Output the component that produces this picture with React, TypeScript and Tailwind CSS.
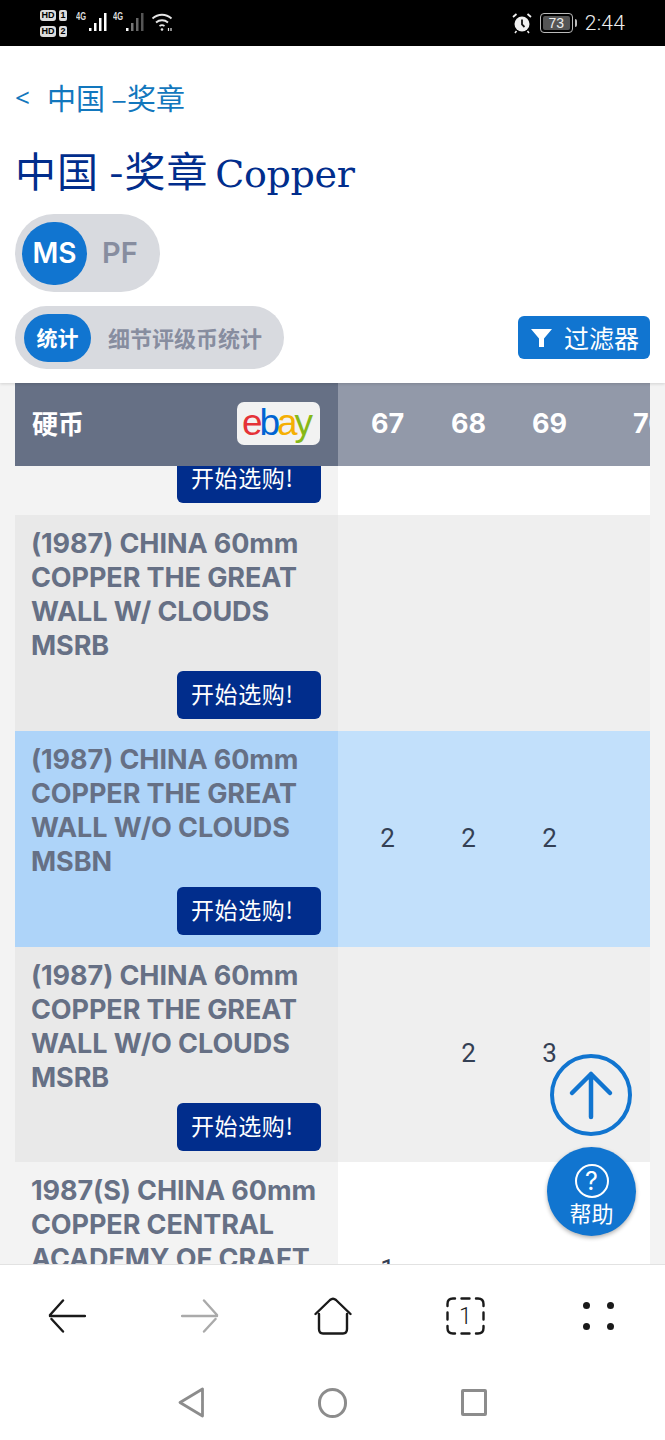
import React from "react";

const sans = "font-['Inter','Noto_Sans_CJK_SC',sans-serif]";

const Signal = ({ dim }: { dim?: boolean }) => (
  <div className="flex items-start w-[32px]">
    <span className="w-[12px] text-[10px] leading-[10px] font-bold text-[#ddd] font-['Liberation_Sans',sans-serif] scale-x-75 origin-left">4G</span>
    <svg width="20" height="20" viewBox="0 0 20 20">
      <rect x="1" y="16" width="2.500" height="3" fill="#fff" />
      <rect x="6" y="11" width="2.500" height="8" fill={dim ? "#777" : "#fff"} />
      <rect x="11" y="6" width="2.500" height="13" fill={dim ? "#666" : "#fff"} />
      <rect x="16" y="1" width="2.500" height="18" fill={dim ? "#555" : "#fff"} />
    </svg>
  </div>
);

const HdBadge = ({ n }: { n: number }) => (
  <div className="flex items-center gap-[3px]">
    <span className="w-[16px] h-[11px] rounded-[3px] bg-[#ddd] text-black text-[9px] leading-[11px] font-bold text-center font-['Liberation_Sans',sans-serif]">HD</span>
    <span className="w-[8px] h-[11px] rounded-[2px] bg-[#ddd] text-black text-[9px] leading-[11px] font-bold text-center font-['Liberation_Sans',sans-serif]">{n}</span>
  </div>
);

const StatusBar = () => (
  <div className="h-[46px] shrink-0 bg-black flex items-center justify-between pl-[40px] pr-[40px]">
    <div className="flex items-center">
      <div className="flex flex-col gap-[5px] pt-px">
        <HdBadge n={1} />
        <HdBadge n={2} />
      </div>
      <div className="flex items-center gap-[5px] ml-[9px] mt-[-2px]">
        <Signal />
        <Signal dim />
      </div>
      <svg width="24" height="22" viewBox="0 0 24 22" className="ml-[6px] mt-[-2px]" fill="none" stroke="#e5e5e5" strokeWidth="1.800">
        <path d="M1.500 7.500C7 2.500 15 2.500 20.500 7.500" />
        <path d="M5 11.500C8.500 8.500 13.500 8.500 17 11.500" />
        <path d="M8.500 15C10 14 12 14 13.500 15" />
        <circle cx="11" cy="18.500" r="1.300" fill="#e5e5e5" stroke="none" />
        <path d="M17.500 17v3M20 17v3" strokeWidth="1.200" />
      </svg>
    </div>
    <div className="flex items-center">
      <svg width="22" height="22" viewBox="0 0 22 22" className="mr-[7px]">
        <circle cx="11" cy="12" r="7.500" fill="#f0f0f0" />
        <path d="M11 7.500V12.500L13.500 15" stroke="#111" strokeWidth="1.800" fill="none" />
        <path d="M2 5L5.500 2M20 5L16.500 2" stroke="#f0f0f0" strokeWidth="1.800" />
        <path d="M5.500 19L4 21M16.500 19L18 21" stroke="#f0f0f0" strokeWidth="1.500" />
      </svg>
      <div className="w-[33px] h-[20px] rounded-[4px] border border-[#bbb] p-[2px] flex">
        <div className="flex-1 rounded-[2px] bg-[#555] text-[#eee] text-[14px] leading-[14px] text-center font-['Liberation_Sans',sans-serif]">73</div>
      </div>
      <div className="w-[2px] h-[8px] bg-[#bbb] ml-[2px] mr-[8px] rounded-r-sm" />
      <span className="text-[21px] leading-none text-[#eee] font-['Roboto',sans-serif] font-light tracking-[0.2px]">2:44</span>
    </div>
  </div>
);

const Header = () => (
  <div className="h-[337px] shrink-0 bg-white relative z-10 shadow-[0_1px_3px_rgba(0,0,0,0.14)] pl-[15px] pr-[15px]">
    <div className="pt-[31px] flex items-center h-[70px] text-[29px] leading-[34px] text-[#1277bd]">
      <span className="text-[26px] mr-[17px] font-['Noto_Sans',sans-serif]">&lt;</span>
      <span className="font-['Noto_Sans_CJK_SC',sans-serif]">中国 –奖章</span>
    </div>
    <h1 className="mt-[28px] text-[38px] leading-[50px] text-[#012d8c] font-['DejaVu_Serif','Noto_Sans_CJK_SC',serif] tracking-[-0.3px] font-normal whitespace-nowrap">
      <span className="mr-[-5px] text-[41px] tracking-[1px] font-['Noto_Sans_CJK_SC',serif]">中国 -奖章</span> Copper
    </h1>
    <div className="mt-[15px] w-[145px] h-[78px] rounded-full bg-[#d8dadf] flex items-center pl-[7px]">
      <div className={`w-[65px] h-[63px] rounded-full bg-[#1175d0] text-white text-[28px] font-semibold flex items-center justify-center ${sans}`}>MS</div>
      <span className={`ml-[15px] text-[29px] font-semibold text-[#878d9f] ${sans}`}>PF</span>
    </div>
    <div className="mt-[14px] flex items-center justify-between">
      <div className="w-[269px] h-[63px] rounded-full bg-[#d8dadf] flex items-center pl-[9px]">
        <div className="w-[67px] h-[48px] rounded-full bg-[#1175d0] text-white text-[21px] font-bold flex items-center justify-center font-['Noto_Sans_CJK_SC',sans-serif]">统计</div>
        <span className="ml-[17px] text-[22px] font-bold text-[#878d9f] font-['Noto_Sans_CJK_SC',sans-serif]">细节评级币统计</span>
      </div>
      <button className="w-[132px] h-[43px] rounded-[6px] bg-[#1175d0] text-white flex items-center pl-[13px]">
        <svg width="21" height="20" viewBox="0 0 21 20" fill="#fff">
          <path d="M0 1h21L13 10.500V19H8V10.500z" />
        </svg>
        <span className="ml-[12px] text-[25px] leading-none font-['Noto_Sans_CJK_SC',sans-serif]">过滤器</span>
      </button>
    </div>
  </div>
);

const EbayLogo = () => (
  <div className="w-[83px] h-[43px] mb-[2px] rounded-[7px] bg-[#f2f2f2] flex items-center justify-center pb-[3px] pr-[5px] font-['Liberation_Sans',sans-serif] text-[37px] leading-none tracking-[-3px]">
    <span className="text-[#e53238]">e</span>
    <span className="text-[#0064d2]">b</span>
    <span className="text-[#f5af02]">a</span>
    <span className="text-[#86b817]">y</span>
  </div>
);

const TableHead = () => (
  <div className="flex h-[83px] shrink-0 relative z-[5] overflow-hidden">
    <div className="w-[323px] shrink-0 bg-[#667085] flex items-center justify-between pl-[17px] pr-[18px]">
      <span className="text-white text-[26px] leading-none pb-[4px] font-bold font-['Noto_Sans_CJK_SC',sans-serif]">硬币</span>
      <EbayLogo />
    </div>
    <div className={`flex-1 bg-[#9299a9] flex items-center text-white text-[27px] font-bold pl-[9px] ${sans}`}>
      <span className="w-[81px] text-center">67</span>
      <span className="w-[81px] text-center">68</span>
      <span className="w-[81px] text-center">69</span>
      <span className="pl-[43px] whitespace-nowrap">70</span>
    </div>
  </div>
);

const BuyButton = () => (
  <div className="flex justify-end pr-[17px]">
    <button className="w-[144px] h-[48px] rounded-[6px] bg-[#012d8c] text-white text-left pl-[14px] pb-[3px] text-[23px] leading-none font-['Noto_Sans_CJK_SC',sans-serif] tracking-[0.6px]">
      开始选购!
    </button>
  </div>
);

type RowProps = {
  lines: string[];
  values?: (number | null)[];
  left: string;
  right: string;
  height?: string;
};

const CoinRow = ({ lines, values = [], left, right, height = "h-[216px]" }: RowProps) => (
  <div className={`flex shrink-0 ${height}`}>
    <div className={`w-[323px] shrink-0 pt-[12px] ${left}`}>
      <div className={`pl-[16px] text-[27px] leading-[34px] font-bold text-[#667085] whitespace-nowrap tracking-[-0.1px] ${sans}`}>
        {lines.map((l) => (
          <div key={l}>{l}</div>
        ))}
      </div>
      <div className="mt-[8px]">
        <BuyButton />
      </div>
    </div>
    <div className={`flex-1 flex items-center pl-[9px] pb-[2px] text-[26px] text-[#344054] font-['Roboto',sans-serif] ${right}`}>
      {values.map((v, i) => (
        <span key={i} className="w-[81px] text-center">{v}</span>
      ))}
    </div>
  </div>
);

const TopRow = () => (
  <div className="flex h-[49px] shrink-0">
    <div className="w-[323px] shrink-0 bg-[#f3f3f3] overflow-hidden flex flex-col justify-end pb-[12px]">
      <BuyButton />
    </div>
    <div className="flex-1 bg-white" />
  </div>
);

const Fabs = () => (
  <>
    <div className="absolute left-[550px] top-[1054px] z-20 w-[82px] h-[82px]">
      <svg width="82" height="82" viewBox="0 0 82 82" fill="none" stroke="#1175d0" strokeLinecap="round" strokeLinejoin="round">
        <circle cx="41" cy="41" r="39" strokeWidth="4" />
        <path d="M41 63V20M22 39L41 20L60 39" strokeWidth="4.500" />
      </svg>
    </div>
    <div className="absolute left-[547px] top-[1147px] z-20 w-[89px] h-[89px] rounded-full bg-[#1175d0] shadow-[0_2px_4px_rgba(0,0,0,0.3)] flex flex-col items-center pt-[17px] text-white">
      <div className={`w-[34px] h-[34px] rounded-full border-2 border-white flex items-center justify-center text-[25px] leading-none ${sans}`}>?</div>
      <span className="mt-[1px] text-[22px] leading-[26px] font-['Noto_Sans_CJK_SC',sans-serif]">帮助</span>
    </div>
  </>
);

const BrowserBar = () => (
  <div className="h-[176px] shrink-0 bg-white border-t border-[#e2e2e2] relative z-10">
    <div className="h-[101px] grid grid-cols-5 w-[665px] place-items-center">
      <svg width="38" height="34" viewBox="0 0 38 34" fill="none" stroke="#1a1a1a" strokeWidth="2.400" strokeLinecap="round">
        <path d="M2 17H37M15 1.500L2 16M3.500 20L15 32.500" />
      </svg>
      <svg width="38" height="34" viewBox="0 0 38 34" fill="none" stroke="#aaa" strokeWidth="2.400" strokeLinecap="round">
        <path d="M1 17H36M23 1.500L36 16M34.500 20L23 32.500" />
      </svg>
      <svg width="38" height="38" viewBox="0 0 38 38" fill="none" stroke="#1a1a1a" strokeWidth="2.400" strokeLinecap="round" strokeLinejoin="round">
        <path d="M1.500 17L16 3Q19 0.500 22 3L36.500 17M5 17V32Q5 36.500 9 36.500H29Q33 36.500 33 32V17" />
      </svg>
      <svg width="39" height="38" viewBox="0 0 39 38" fill="none" stroke="#1a1a1a" strokeWidth="2.400" strokeLinecap="round">
        <path d="M1.500 9V7Q1.500 1.500 7 1.500H9M15.500 1.500H23.500M30 1.500H32Q37.500 1.500 37.500 7V9" />
        <path d="M1.500 15.500V22.500M37.500 15.500V22.500" />
        <path d="M1.500 29V31Q1.500 36.500 7 36.500H9M15.500 36.500H23.500M30 36.500H32Q37.500 36.500 37.500 31V29" />
        <text x="19.500" y="27" textAnchor="middle" fontSize="23" fontWeight="300" fontFamily="Roboto, sans-serif" fill="#1a1a1a" stroke="none">1</text>
      </svg>
      <div className="grid grid-cols-2 gap-x-[17px] gap-y-[14px]">
        <span className="w-[7px] h-[7px] rounded-full bg-[#1a1a1a]" />
        <span className="w-[7px] h-[7px] rounded-full bg-[#1a1a1a]" />
        <span className="w-[7px] h-[7px] rounded-full bg-[#1a1a1a]" />
        <span className="w-[7px] h-[7px] rounded-full bg-[#1a1a1a]" />
      </div>
    </div>
    <div className="flex justify-center items-center gap-[114px] mt-[21px]">
      <svg width="26" height="31" viewBox="0 0 26 31" fill="none" stroke="#8c8c8c" strokeWidth="2.800" strokeLinejoin="round">
        <path d="M24.500 2V29L2 15.500z" />
      </svg>
      <span className="w-[29px] h-[30px] rounded-full border-[3px] border-[#8c8c8c]" />
      <span className="w-[26px] h-[27px] rounded-[2px] border-[3px] border-[#8c8c8c]" />
    </div>
  </div>
);

export default function App() {
  return (
    <div className="relative w-[665px] h-[1440px] overflow-hidden flex flex-col bg-[#f3f3f3]">
      <StatusBar />
      <Header />
      <main className="flex-1 min-h-0 overflow-hidden px-[15px] flex flex-col">
        <TableHead />
        <TopRow />
        <CoinRow
          lines={["(1987) CHINA 60mm", "COPPER THE GREAT", "WALL W/ CLOUDS", "MSRB"]}
          left="bg-[#e9e9e9]"
          right="bg-[#efefef]"
        />
        <CoinRow
          lines={["(1987) CHINA 60mm", "COPPER THE GREAT", "WALL W/O CLOUDS", "MSBN"]}
          values={[2, 2, 2]}
          left="bg-[#aed4f9]"
          right="bg-[#c2e0fb]"
        />
        <CoinRow
          lines={["(1987) CHINA 60mm", "COPPER THE GREAT", "WALL W/O CLOUDS", "MSRB"]}
          values={[null, 2, 3]}
          left="bg-[#e9e9e9]"
          right="bg-[#efefef]"
          height="h-[215px]"
        />
        <CoinRow
          lines={["1987(S) CHINA 60mm", "COPPER CENTRAL", "ACADEMY OF CRAFT", "ART MSBN"]}
          values={[1]}
          left="bg-[#f3f3f3]"
          right="bg-white"
        />
      </main>
      <BrowserBar />
      <Fabs />
    </div>
  );
}
